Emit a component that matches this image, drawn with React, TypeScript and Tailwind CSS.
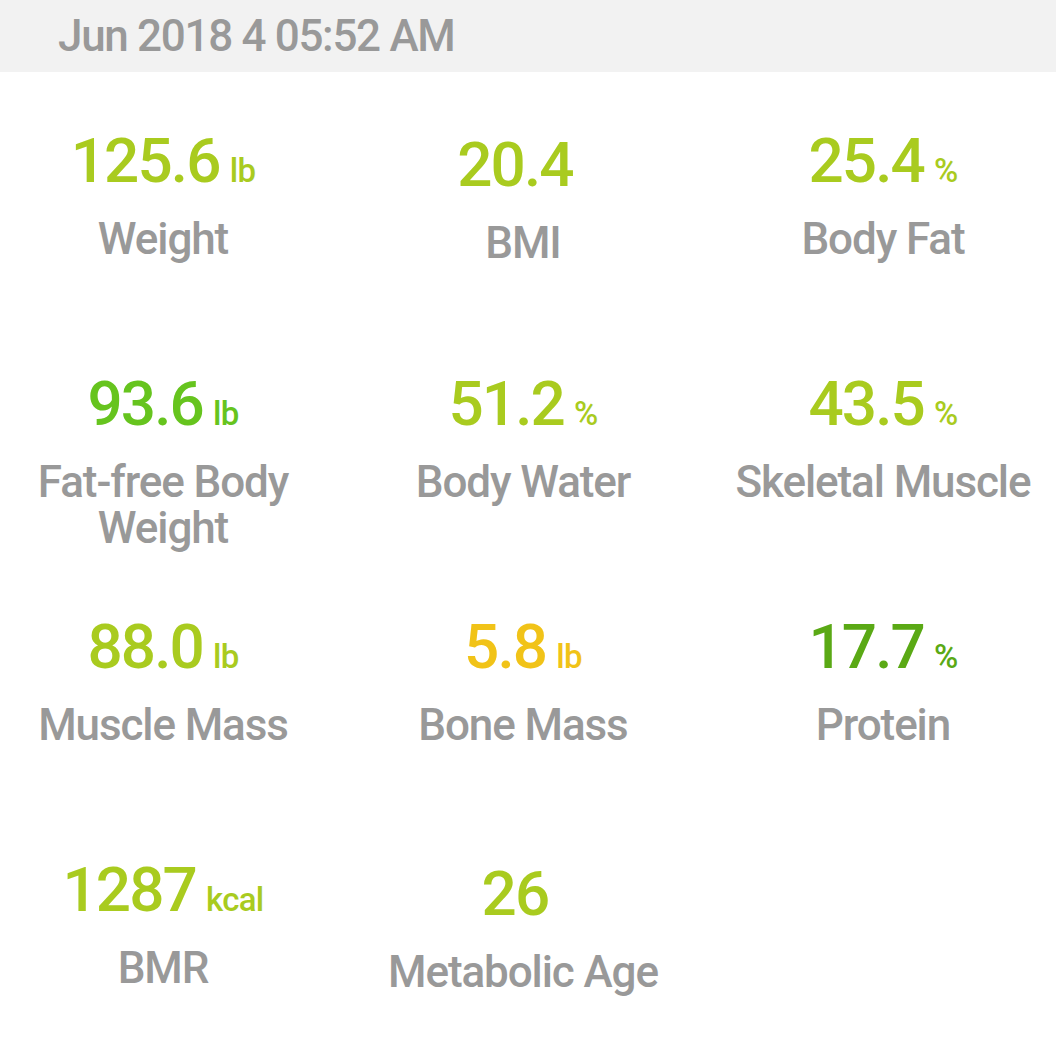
const font = { fontFamily: "Roboto, 'Noto Sans', sans-serif" };

type Metric = {
  value: string;
  unit?: string;
  label: string;
  color: string;
};

const metrics: Metric[] = [
  { value: "125.6", unit: "lb", label: "Weight", color: "text-[#a9cb1f]" },
  { value: "20.4", label: "BMI", color: "text-[#a9cb1f]" },
  { value: "25.4", unit: "%", label: "Body Fat", color: "text-[#a9cb1f]" },
  { value: "93.6", unit: "lb", label: "Fat-free Body Weight", color: "text-[#66c41e]" },
  { value: "51.2", unit: "%", label: "Body Water", color: "text-[#a9cb1f]" },
  { value: "43.5", unit: "%", label: "Skeletal Muscle", color: "text-[#a9cb1f]" },
  { value: "88.0", unit: "lb", label: "Muscle Mass", color: "text-[#a9cb1f]" },
  { value: "5.8", unit: "lb", label: "Bone Mass", color: "text-[#f1c318]" },
  { value: "17.7", unit: "%", label: "Protein", color: "text-[#5aa915]" },
  { value: "1287", unit: "kcal", label: "BMR", color: "text-[#a9cb1f]" },
  { value: "26", label: "Metabolic Age", color: "text-[#a9cb1f]" },
];

const MetricCell = ({ value, unit, label, color }: Metric) => (
  <div className={`flex flex-col items-center h-[243px] ${unit ? "pt-[58px]" : "pt-[62px]"}`}>
    <div className={`flex items-baseline font-medium ${color} ${unit ? "" : "pr-[16px]"}`}>
      <span className="text-[62px] leading-none tracking-[-0.03em]">{value}</span>
      {unit && <span className="ml-[10px] text-[33px] leading-none tracking-[-0.02em]">{unit}</span>}
    </div>
    <p className="mt-[24px] text-center text-[44px] leading-[46px] font-medium text-[#999999] tracking-[-0.025em]">
      {label}
    </p>
  </div>
);

export default function App() {
  return (
    <div className="w-[1056px] h-[1063px] bg-white overflow-hidden" style={font}>
      <div className="h-[72px] bg-[#f2f2f2] flex items-center pl-[58px]">
        <h1 className="text-[44px] leading-none font-medium text-[#999999] tracking-[-0.03em]">Jun 2018 4 05:52 AM</h1>
      </div>
      <div className="grid grid-cols-3 gap-x-[34px] pr-[10px]">
        {metrics.map((m) => (
          <MetricCell key={m.label} {...m} />
        ))}
      </div>
    </div>
  );
}
